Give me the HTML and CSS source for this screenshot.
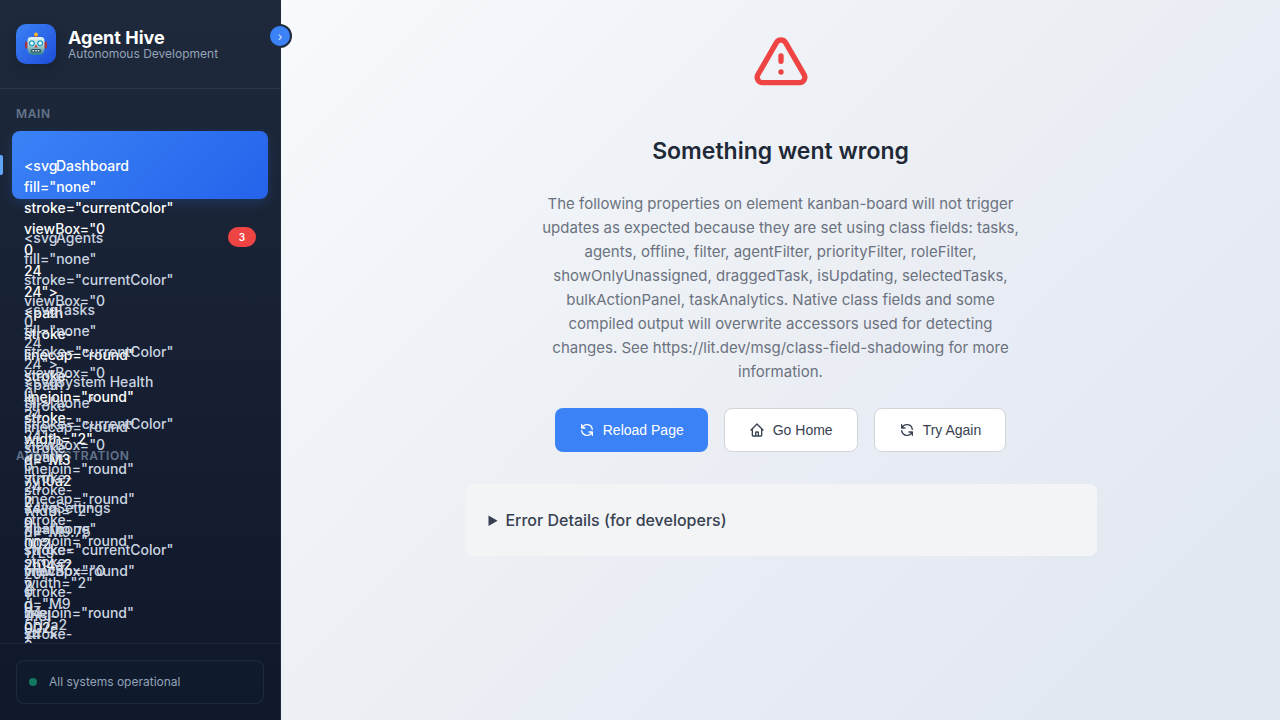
FILE: index.html
```
<!DOCTYPE html>
<html lang="en">
<head>
<meta charset="utf-8">
<meta name="viewport" content="width=device-width, initial-scale=1">
<title>Agent Hive</title>
<link rel="stylesheet" href="styles.css">
</head>
<body>
<div class="app">
  <aside class="sidebar">
    <header class="brand">
      <div class="brand-logo">
        <svg class="robot" viewBox="0 0 24 24" aria-hidden="true">
          <defs>
            <linearGradient id="face" x1="0" y1="0" x2="0" y2="1">
              <stop offset="0" stop-color="#e6f7f2"/>
              <stop offset="0.5" stop-color="#a5cfcf"/>
              <stop offset="1" stop-color="#2c7f8e"/>
            </linearGradient>
          </defs>
          <rect x="1" y="9.500" width="3" height="7" rx="1.500" fill="#a83248"/>
          <rect x="20" y="9.500" width="3" height="7" rx="1.500" fill="#a83248"/>
          <rect x="10.500" y="3" width="3" height="3" fill="#a33a3a"/>
          <circle cx="12" cy="2.500" r="1.900" fill="#f9b52b"/>
          <path d="M7 5h10q3.500 0 3.500 4v7.500q0 6.500-5.500 6.500H9q-5.500 0-5.500-6.500V9Q3.500 5 7 5z" fill="url(#face)"/>
          <circle cx="7.800" cy="11.200" r="3" fill="#1f9fc0"/>
          <circle cx="16.200" cy="11.200" r="3" fill="#1f9fc0"/>
          <circle cx="7.800" cy="11.200" r="1.700" fill="#e9ffff"/>
          <circle cx="16.200" cy="11.200" r="1.700" fill="#e9ffff"/>
          <path d="M12 12.500l1.700 3h-3.400z" fill="#d9363e"/>
          <rect x="7" y="17" width="10" height="3.500" rx="1.500" fill="#2b4e5c"/>
          <path d="M8.500 18.700h7" stroke="#e4f1ef" stroke-width="1.600" stroke-dasharray="1.600 1"/>
        </svg>
      </div>
      <div>
        <div class="brand-name">Agent Hive</div>
        <div class="brand-tag">Autonomous Development</div>
      </div>
      <button class="collapse" type="button" aria-label="Collapse sidebar">›</button>
    </header>
    <nav class="nav">
      <section class="nav-section">
        <h2 class="nav-title">Main</h2>
        <a class="nav-item active" href="#dashboard"><span class="nav-icon">&lt;svg fill="none" stroke="currentColor" viewBox="0 0 24 24"&gt; &lt;path stroke-linecap="round" stroke-linejoin="round" stroke-width="2" d="M3 7v10a2 2 0 002 2h14a2 2 0 002-2V9a2 2 0 00-2-2H5a2 2 0 00-2-2z"/&gt; &lt;/svg&gt;</span><span class="nav-label">Dashboard</span></a>
        <a class="nav-item" href="#agents"><span class="nav-icon">&lt;svg fill="none" stroke="currentColor" viewBox="0 0 24 24"&gt; &lt;path stroke-linecap="round" stroke-linejoin="round" stroke-width="2" d="M9.75 17L9 20l-1 1h8l-1-1-.75-3M3 13h18M5 17h14a2 2 0 002-2V5a2 2 0 00-2-2H5a2 2 0 00-2 2v10a2 2 0 002 2z"/&gt; &lt;/svg&gt;</span><span class="nav-label">Agents</span><span class="nav-badge">3</span></a>
        <a class="nav-item" href="#tasks"><span class="nav-icon">&lt;svg fill="none" stroke="currentColor" viewBox="0 0 24 24"&gt; &lt;path stroke-linecap="round" stroke-linejoin="round" stroke-width="2" d="M9 5H7a2 2 0 00-2 2v12a2 2 0 002 2h10a2 2 0 002-2V7a2 2 0 00-2-2h-2"/&gt; &lt;/svg&gt;</span><span class="nav-label">Tasks</span></a>
        <a class="nav-item" href="#health"><span class="nav-icon">&lt;svg fill="none" stroke="currentColor" viewBox="0 0 24 24"&gt; &lt;path stroke-linecap="round" stroke-linejoin="round" stroke-width="2" d="M9 12l2 2 4-4"/&gt; &lt;/svg&gt;</span><span class="nav-label">System Health</span></a>
      </section>
      <section class="nav-section">
        <h2 class="nav-title">Administration</h2>
        <a class="nav-item" href="#settings"><span class="nav-icon">&lt;svg fill="none" stroke="currentColor" viewBox="0 0 24 24"&gt; &lt;path stroke-linecap="round" stroke-linejoin="round" stroke-width="2" d="M15 12a3 3 0 11-6 0 3 3 0 016 0z"/&gt; &lt;/svg&gt;</span><span class="nav-label">Settings</span></a>
      </section>
    </nav>
    <footer class="side-footer">
      <div class="status"><span class="status-dot"></span><span>All systems operational</span></div>
    </footer>
  </aside>
  <main class="main">
    <svg class="alert-icon" viewBox="0 0 24 24" aria-hidden="true"><path d="M12 9v2m0 4h.01m-6.938 4h13.856c1.54 0 2.502-1.667 1.732-3L13.732 4c-.77-1.333-2.694-1.333-3.464 0L3.34 16c-.77 1.333.192 3 1.732 3z"/></svg>
    <h1 class="title">Something went wrong</h1>
    <p class="message">The following properties on element kanban-board will not trigger updates as expected because they are set using class fields: tasks, agents, offline, filter, agentFilter, priorityFilter, roleFilter, showOnlyUnassigned, draggedTask, isUpdating, selectedTasks, bulkActionPanel, taskAnalytics. Native class fields and some compiled output will overwrite accessors used for detecting changes. See https://lit.dev/msg/class-field-shadowing for more information.</p>
    <div class="actions">
      <button class="btn primary" type="button"><svg class="btn-icon" viewBox="0 0 24 24" aria-hidden="true"><path d="M4 4v5h.582m15.356 2A8.001 8.001 0 004.582 9m0 0H9m11 11v-5h-.581m0 0a8.003 8.003 0 01-15.357-2m15.357 2H15"/></svg>Reload Page</button>
      <button class="btn" type="button"><svg class="btn-icon" viewBox="0 0 24 24" aria-hidden="true"><path d="M3 12l2-2m0 0l7-7 7 7M5 10v10a1 1 0 001 1h3m10-11l2 2m-2-2v10a1 1 0 01-1 1h-3m-6 0a1 1 0 001-1v-4a1 1 0 011-1h2a1 1 0 011 1v4a1 1 0 001 1m-6 0h6"/></svg>Go Home</button>
      <button class="btn" type="button"><svg class="btn-icon" viewBox="0 0 24 24" aria-hidden="true"><path d="M4 4v5h.582m15.356 2A8.001 8.001 0 004.582 9m0 0H9m11 11v-5h-.581m0 0a8.003 8.003 0 01-15.357-2m15.357 2H15"/></svg>Try Again</button>
    </div>
    <details class="details">
      <summary>Error Details (for developers)</summary>
    </details>
  </main>
</div>
</body>
</html>
```
FILE: styles.css
```
* { box-sizing: border-box; }
body {
  margin: 0;
  font-family: Inter, "Liberation Sans", sans-serif;
  font-size: 16px;
  line-height: 24px;
}
.app { display: flex; height: 100vh; }

.sidebar {
  display: flex;
  flex-direction: column;
  flex: none;
  position: relative;
  width: 281px;
  border-right: 1px solid #1e293b;
  background: linear-gradient(180deg, #1e293b 0%, #0f172a 100%);
}
.brand {
  display: flex;
  align-items: center;
  gap: 12px;
  padding: 24px 16px;
  border-bottom: 1px solid rgba(148, 163, 184, 0.12);
}
.brand-logo {
  display: flex;
  align-items: center;
  justify-content: center;
  width: 40px;
  height: 40px;
  border-radius: 10px;
  background: linear-gradient(135deg, #3b82f6, #1d4ed8);
  box-shadow: 0 4px 12px rgba(0, 0, 0, 0.15);
}
.robot { width: 24px; height: 24px; }
.brand-name { color: #fff; font-size: 18px; font-weight: 700; line-height: 20px; }
.brand-tag { color: #94a3b8; font-size: 12px; line-height: 12px; }
.collapse {
  position: absolute;
  top: 24px;
  right: -12px;
  z-index: 2;
  display: flex;
  align-items: center;
  justify-content: center;
  width: 24px;
  height: 24px;
  padding: 0;
  border: 2px solid #1e293b;
  border-radius: 50%;
  background: #3b82f6;
  color: rgba(255, 255, 255, 0.8);
  font-family: Inter, "Liberation Sans", sans-serif;
  font-size: 12px;
}

.nav { flex: 1; min-height: 0; padding: 16px 0; overflow: hidden; }
.nav-section { margin-bottom: 32px; padding: 0 12px; }
.nav-title {
  margin: 0 0 8px;
  padding: 0 4px;
  color: #64748b;
  font-size: 12px;
  font-weight: 600;
  line-height: 18px;
  letter-spacing: 0.05em;
  text-transform: uppercase;
}
.nav-item {
  display: flex;
  align-items: center;
  gap: 12px;
  position: relative;
  height: 68px;
  margin-bottom: 4px;
  padding: 0 12px;
  border-radius: 8px;
  color: #cbd5e1;
  font-size: 14px;
  font-weight: 500;
  line-height: 21px;
  text-decoration: none;
}
.nav-item.active {
  background: linear-gradient(135deg, #3b82f6, #2563eb);
  box-shadow: 0 4px 12px rgba(59, 130, 246, 0.2);
  color: #fff;
}
.nav-item.active::before {
  content: "";
  position: absolute;
  left: -12px;
  top: 24px;
  width: 3px;
  height: 20px;
  border-radius: 0 2px 2px 0;
  background: #60a5fa;
}
.nav-icon { flex: none; width: 20px; height: 20px; }
.nav-label { flex: 1; }
.nav-badge {
  padding: 0 11px;
  border-radius: 10px;
  background: #ef4444;
  color: #fff;
  font-size: 10px;
  font-weight: 600;
  line-height: 20px;
}

.side-footer {
  padding: 16px;
  border-top: 1px solid rgba(148, 163, 184, 0.12);
}
.status {
  display: flex;
  align-items: center;
  gap: 12px;
  padding: 12px;
  border: 1px solid rgba(148, 163, 184, 0.12);
  border-radius: 8px;
  background: rgba(16, 185, 129, 0.02);
  color: #94a3b8;
  font-size: 12px;
  line-height: 18px;
}
.status-dot { width: 8px; height: 8px; border-radius: 50%; background: #10b981; opacity: 0.6; }

.main {
  display: flex;
  flex-direction: column;
  align-items: center;
  flex: 1;
  min-width: 0;
  padding: 32px;
  background: linear-gradient(135deg, #f8fafc 0%, #f1f5f9 22%, #ebeef3 50%, #e8ecf5 62%, #e2e8f0 90%, #e2e8f0 100%);
}
.alert-icon, .btn-icon {
  flex: none;
  fill: none;
  stroke: currentColor;
  stroke-width: 2;
  stroke-linecap: round;
  stroke-linejoin: round;
}
.alert-icon { width: 64px; height: 64px; margin-bottom: 37px; color: #ef4444; }
.title { margin: 0 0 23px; color: #1f2937; font-size: 23px; font-weight: 600; line-height: 36px; }
.message { max-width: 490px; margin: 0 0 24px; color: #6b7280; font-size: 15px; text-align: center; }
.actions { display: flex; flex-wrap: wrap; justify-content: center; gap: 16px; margin-bottom: 32px; }
.btn {
  display: flex;
  align-items: center;
  gap: 8px;
  height: 44px;
  padding: 0 24px;
  border: 1px solid #d1d5db;
  border-radius: 8px;
  background: #fff;
  color: #374151;
  font-family: "Liberation Sans", sans-serif;
  font-size: 14px;
}
.btn.primary { border: 0; background: #3b82f6; color: #fff; }
.btn-icon { width: 16px; height: 16px; }
.details {
  width: 100%;
  max-width: 632px;
  padding: 24px;
  border-radius: 8px;
  background: #f3f4f6;
  color: #374151;
}
.details summary { font-weight: 500; cursor: pointer; }
```
